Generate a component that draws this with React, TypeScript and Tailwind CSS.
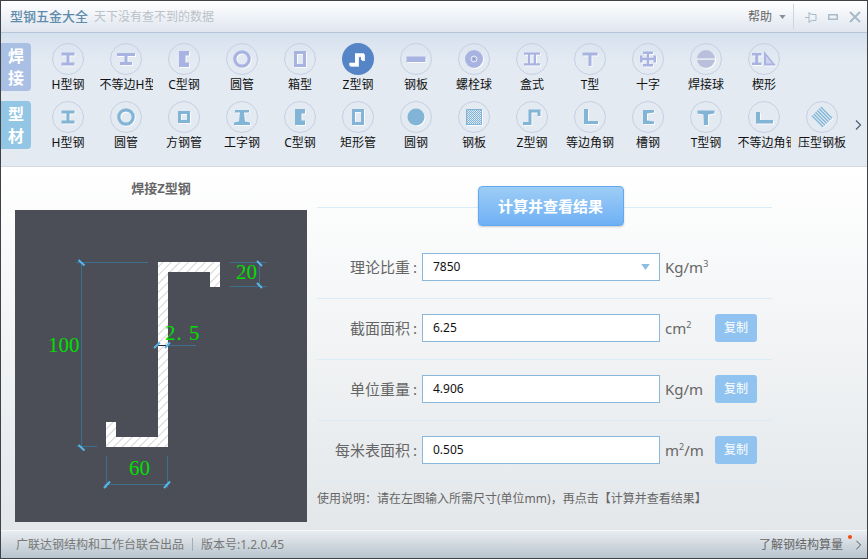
import React from "react";

const H = (
  <path d="M-6.5-6.5h13v3h-5v7h5v3h-13v-3h5v-7h-5z" fill="currentColor" />
);
const UH = (
  <path d="M-9-6h18v3h-7.5v6h4.5v3h-12v-3h4.5v-6h-7.5z" fill="currentColor" />
);
const C = (
  <path d="M-5-8H5v4.5H1.5v7H5V8H-5z" fill="currentColor" />
);
const Tube = (
  <circle r="7.2" fill="none" stroke="currentColor" strokeWidth="3.2" />
);
const BoxT = (
  <rect x="-4.5" y="-6.5" width="9" height="13" fill="none" stroke="currentColor" strokeWidth="3" />
);
const Sq = (
  <rect x="-4.5" y="-4.5" width="9" height="9" fill="none" stroke="currentColor" strokeWidth="3" />
);
const ZActive = (
  <path d="M-8.7 5.2H-1.5V-4.2H4.5V1" fill="none" stroke="#fff" strokeWidth="3" />
);
const Plate = <rect x="-9.5" y="-2.5" width="19" height="5.5" fill="currentColor" />;
const Bolt = (
  <g>
    <circle r="9" fill="currentColor" />
    <circle r="3" fill="none" stroke="#e8ecf6" strokeWidth="1" />
    <circle r="1" fill="#8f98b8" />
  </g>
);
const BoxS = (
  <g fill="currentColor">
    <rect x="-8" y="-6.5" width="16" height="2.2" />
    <rect x="-8" y="4.3" width="16" height="2.2" />
    <rect x="-4" y="-5" width="2.2" height="10" />
    <rect x="1.8" y="-5" width="2.2" height="10" />
  </g>
);
const T = <path d="M-7.5-6.5h15v3h-6V7h-3V-3.5h-6z" fill="currentColor" />;
const Cross = (
  <path d="M-5-7.5H5v2.5H1.2v3.8H5.5v-2.3H8v7H5.5v-2.3H1.2V5H5v2.5H-5V5h3.8V1.2H-5.5v2.3H-8v-7h2.5v2.3h4.3V-5H-5z" fill="currentColor" />
);
const Ball = (
  <g>
    <circle r="9" fill="#b8c0dc" />
    <rect x="-9" y="-0.6" width="18" height="1.4" fill="#eef1f7" />
  </g>
);
const Wedge = (
  <g>
    <path d="M-12-6h9.5v2.5h-3.2v7h3.2V6H-12V3.5h3.2v-7H-12z" fill="currentColor" />
    <path d="M0-8 12 6.5H0z" fill="currentColor" />
    <path d="M2-3 8 4.5H2z" fill="#cdd3ee" />
  </g>
);
const IBeam = (
  <path d="M-7-7H7v2.5H2L3 4.5l5 1V8H-8V5.5l5-1 1-9h-5z" fill="currentColor" />
);
const Round = <circle r="8.5" fill="currentColor" />;
const Dot = (
  <g>
    <rect x="-8" y="-8" width="16" height="16" fill="currentColor" />
    <rect x="-7" y="-7" width="14" height="14" fill="url(#dots)" />
  </g>
);
const ZThin = (
  <path d="M-9 6.5H-2V-6H7V-1" fill="none" stroke="currentColor" strokeWidth="3" />
);
const L1 = <path d="M-6-8h4V4H8v3H-6z" fill="currentColor" />;
const Chan = <path d="M-5-7H6v2.5L-1-3.5v7L6 4.5V7H-5z" fill="currentColor" />;
const T2 = (
  <path d="M-8.5-6.5h17v3l-6.5 1L2 8h-4l-.5-10.5-6-1z" fill="currentColor" />
);
const L2 = <path d="M-8-5h4V3H9v3.5H-8z" fill="currentColor" />;
const Press = (
  <g transform="rotate(45)" fill="currentColor">
    <rect x="-8" y="-7" width="16" height="1.4" />
    <rect x="-8" y="-4.5" width="16" height="1.4" />
    <rect x="-8" y="-2" width="16" height="1.4" />
    <rect x="-8" y="0.5" width="16" height="1.4" />
    <rect x="-8" y="3" width="16" height="1.4" />
    <rect x="-8" y="5.5" width="16" height="1.4" />
  </g>
);

type Item = { label: string; glyph: React.ReactNode; active?: boolean };

const rowA: Item[] = [
  { label: "H型钢", glyph: H },
  { label: "不等边H型", glyph: UH },
  { label: "C型钢", glyph: C },
  { label: "圆管", glyph: Tube },
  { label: "箱型", glyph: BoxT },
  { label: "Z型钢", glyph: ZActive, active: true },
  { label: "钢板", glyph: Plate },
  { label: "螺栓球", glyph: Bolt },
  { label: "盒式", glyph: BoxS },
  { label: "T型", glyph: T },
  { label: "十字", glyph: Cross },
  { label: "焊接球", glyph: Ball },
  { label: "楔形", glyph: Wedge },
];

const rowB: Item[] = [
  { label: "H型钢", glyph: H },
  { label: "圆管", glyph: Tube },
  { label: "方钢管", glyph: Sq },
  { label: "工字钢", glyph: IBeam },
  { label: "C型钢", glyph: C },
  { label: "矩形管", glyph: BoxT },
  { label: "圆钢", glyph: Round },
  { label: "钢板", glyph: Dot },
  { label: "Z型钢", glyph: ZThin },
  { label: "等边角钢", glyph: L1 },
  { label: "槽钢", glyph: Chan },
  { label: "T型钢", glyph: T2 },
  { label: "不等边角钢", glyph: L2 },
  { label: "压型钢板", glyph: Press },
];

function Tile({ item, tone }: { item: Item; tone: string }) {
  return (
    <div className="flex w-[58px] shrink-0 flex-col items-center">
      <div
        className={
          item.active
            ? "flex size-[32px] items-center justify-center rounded-full bg-[#5585c6]"
            : "flex size-[32px] items-center justify-center rounded-full border border-[#c6d0e3]"
        }
      >
        <svg
          viewBox="-16 -16 32 32"
          className={
            "size-[32px] shrink-0 overflow-visible drop-shadow-[1px_1px_0_rgba(255,255,255,0.85)] " + tone
          }
        >
          {item.glyph}
        </svg>
      </div>
      <div className="mt-[1px] h-[18px] w-[53px] overflow-hidden whitespace-nowrap text-center text-[12px] leading-[18px] text-[#111]">
        {item.label}
      </div>
    </div>
  );
}

function SideTab({ text, color }: { text: string[]; color: string }) {
  return (
    <div
      className={
        "flex h-[48px] w-[30px] shrink-0 flex-col items-center justify-center rounded-r-[4px] text-[16px] leading-[22px] font-bold text-white " +
        color
      }
    >
      {text.map((t) => (
        <span key={t}>{t}</span>
      ))}
    </div>
  );
}

function Drawing() {
  const dim = "#3e6f8f";
  const tick = "#58b6e8";
  return (
    <svg viewBox="15 210 292 312" className="h-[312px] w-[292px]">
      <defs>
        <pattern id="hatch" width="6" height="6" patternUnits="userSpaceOnUse" patternTransform="rotate(-45 0 0)">
          <rect width="6" height="6" fill="#fff" />
          <rect x="0" y="0" width="6" height="1" fill="#d4d4d4" />
        </pattern>
      </defs>
      <polygon
        points="158,262 220,262 220,287 210,287 210,272 168,272 168,447 106,447 106,422 116,422 116,437 158,437"
        fill="url(#hatch)"
      />
      <g stroke={dim} strokeWidth="1" fill="none">
        <path d="M76 262.5H148M81.5 262V447M76 446.5H97" />
        <path d="M106.5 456V488M167.5 456V488M104 484.5H168" />
        <path d="M230 262.5H267M230 286.5H267M259.5 262V287" />
        <path d="M168 345.5H196" />
      </g>
      <path d="M158 345.5H168" stroke="#1d2a33" strokeWidth="1" />
      <g stroke={tick} strokeWidth="2" fill="none">
        <path d="M78.5 260 84.5 265.5M78.5 445 84.5 450.5" />
        <path d="M104 488 110 481.5M164 488 170 481.5" />
        <path d="M257 261 262 266M257 283 262 288" />
        <path d="M154 348 160 342.5M165 348 170 342.5" />
      </g>
      <g fill="#00e000" fontFamily="'Liberation Serif', serif" fontSize="21">
        <text x="48" y="352">100</text>
        <text x="129" y="475">60</text>
        <text x="236" y="279">20</text>
        <text x="165" y="340" letterSpacing="1">2. 5</text>
      </g>
    </svg>
  );
}

function FormRow({
  label,
  value,
  unit,
  copy = true,
  select = false,
  first = false,
}: {
  label: string;
  value: string;
  unit: React.ReactNode;
  copy?: boolean;
  select?: boolean;
  first?: boolean;
}) {
  return (
    <div
      className={
        "flex items-start border-b border-[#daecf8] " +
        (first ? "h-[91px] pt-[45px]" : "h-[61px] pt-[15px]")
      }
    >
      <div className="flex w-[100px] justify-end gap-[3px] text-[15px] leading-[28px] whitespace-nowrap text-[#666]">
        <span>{label}</span>
        <span>:</span>
      </div>
      <div className="ml-[5px] flex h-[28px] w-[238px] items-center justify-between border border-[#8ab8dc] bg-white pr-[9px] pl-[10px] text-[12px] text-[#111]">
        <span>{value}</span>
        {select && (
          <svg viewBox="0 0 10 7" className="h-[6px] w-[9px]">
            <path d="M0 0h10L5 7z" fill="#8fbde0" />
          </svg>
        )}
      </div>
      <div className="ml-[5px] w-[50px] text-[15px] leading-[28px] whitespace-nowrap text-[#666]">
        {unit}
      </div>
      {copy && (
        <button className="flex h-[28px] w-[42px] items-center justify-center rounded-[3px] bg-[#90c3ef] text-[12px] text-white">
          复制
        </button>
      )}
    </div>
  );
}

const Sup = ({ children }: { children: React.ReactNode }) => (
  <sup className="top-[-6px] text-[9px]">{children}</sup>
);

export default function App() {
  return (
    <div
      className="flex h-[559px] w-[868px] flex-col overflow-hidden border border-[#3f4346] bg-white"
      style={{ fontFamily: "'Noto Sans', 'Noto Sans CJK SC', sans-serif" }}
    >
      <svg width="0" height="0" className="absolute">
        <defs>
          <pattern id="dots" width="2" height="2" patternUnits="userSpaceOnUse">
            <rect width="1" height="1" fill="#e4eef6" />
            <rect x="1" y="1" width="1" height="1" fill="#cfe0ee" />
          </pattern>
        </defs>
      </svg>

      {/* Title bar */}
      <div className="flex h-[32px] shrink-0 items-center border-b border-[#b7c5d8] bg-linear-to-b from-white to-[#dfe6ef] pl-[9px]">
        <span className="text-[13px] font-medium text-[#5f8bab]">型钢五金大全</span>
        <span className="ml-[6px] text-[12px] text-[#bac1c8]">天下没有查不到的数据</span>
        <div className="ml-auto flex items-center">
          <span className="text-[12px] text-[#666]">帮助</span>
          <svg viewBox="0 0 8 5" className="ml-[7px] h-[4px] w-[7px]">
            <path d="M0 0h8L4 5z" fill="#8a8f96" />
          </svg>
          <div className="ml-[7px] h-[25px] w-px bg-[#cfd6de]" />
          <svg viewBox="0 0 12 12" className="ml-[11px] size-[12px]" fill="none" stroke="#a8b9c9" strokeWidth="1">
            <path d="M0 6.5H4M4 1V12M4 2.5 8 3.5H11V9.5H8L4 10.5" />
          </svg>
          <svg viewBox="0 0 10 6" className="ml-[11px] h-[6px] w-[10px]" fill="none" stroke="#a8b9c9" strokeWidth="1.5">
            <rect x="0.75" y="0.75" width="8.5" height="4.5" />
          </svg>
          <svg viewBox="0 0 12 12" className="mr-[6px] ml-[11px] size-[12px]" fill="none" stroke="#a8b9c9" strokeWidth="2">
            <path d="M1 1 11 11M11 1 1 11" />
          </svg>
        </div>
      </div>

      {/* Toolbar */}
      <div className="flex h-[134px] shrink-0 flex-col border-b border-[#d6d9dd] bg-linear-to-b from-[#d6e1ef] to-[#e3eaf2] to-20% pt-[10px]">
        <div className="flex h-[58px] items-start">
          <SideTab text={["焊", "接"]} color="bg-[#a9c0e4]" />
          <div className="ml-[8px] flex">
            {rowA.map((it) => (
              <Tile key={it.label} item={it} tone={it.active ? "text-white" : "text-[#a9b3e2]"} />
            ))}
          </div>
        </div>
        <div className="flex h-[58px] items-start">
          <SideTab text={["型", "材"]} color="bg-[#92c6e4]" />
          <div className="ml-[8px] flex">
            {rowB.map((it) => (
              <Tile key={it.label} item={it} tone="text-[#82b4d6]" />
            ))}
          </div>
          <svg viewBox="0 0 7 10" className="mt-[19px] ml-[4px] h-[10px] w-[7px]" fill="none" stroke="#4d5f75" strokeWidth="1.2">
            <path d="M1 0.5 5.5 5 1 9.5" />
          </svg>
        </div>
      </div>

      {/* Main */}
      <div className="flex h-[363px] shrink-0 bg-linear-to-b from-white to-[#e3e7ea] pl-[14px]">
        <div className="flex w-[292px] shrink-0 flex-col">
          <div className="flex h-[43px] items-center justify-center text-[13px] font-bold text-[#666]">
            焊接Z型钢
          </div>
          <div className="h-[312px] bg-[#4b4e57]">
            <Drawing />
          </div>
        </div>
        <div className="ml-[10px] w-[455px]">
          <div className="flex h-[41px] items-start justify-center border-b border-[#daecf8] pt-[19px]">
            <button className="ml-[12px] flex h-[40px] w-[146px] shrink-0 items-center justify-center rounded-[4px] border border-[#62a9f1] bg-linear-to-b from-[#9dcdf5] to-[#6fb0f5] text-[15px] font-bold text-white shadow-[0_1px_2px_rgba(0,0,0,0.2)]">
              计算并查看结果
            </button>
          </div>
          <FormRow
            first
            select
            copy={false}
            label="理论比重"
            value="7850"
            unit={
              <>
                Kg/m<Sup>3</Sup>
              </>
            }
          />
          <FormRow
            label="截面面积"
            value="6.25"
            unit={
              <>
                cm<Sup>2</Sup>
              </>
            }
          />
          <FormRow label="单位重量" value="4.906" unit="Kg/m" />
          <FormRow
            label="每米表面积"
            value="0.505"
            unit={
              <>
                m<Sup>2</Sup>/m
              </>
            }
          />
          <div className="pt-[8px] text-[12px] leading-[18px] whitespace-nowrap text-[#666]">
            使用说明：请在左图输入所需尺寸(单位mm)，再点击【计算并查看结果】
          </div>
        </div>
      </div>

      {/* Footer */}
      <div className="flex h-[28px] shrink-0 items-center border-t border-[#f4f6f7] bg-linear-to-b from-[#e9edf0] to-[#b8c4ce] pl-[15px] text-[12px] text-[#777]">
        <span>广联达钢结构和工作台联合出品</span>
        <div className="mx-[8px] h-[13px] w-px bg-[#a3adb6]" />
        <span>版本号:1.2.0.45</span>
        <div className="relative ml-auto flex items-center pr-[5px] text-[#666]">
          <span>了解钢结构算量</span>
          <span className="absolute top-[-1px] right-[15px] size-[4px] rounded-full bg-[#f04a10]" />
          <svg viewBox="0 0 7 12" className="ml-[12px] h-[10px] w-[7px]" fill="none" stroke="#555" strokeWidth="1.2">
            <path d="M1 1 6 6 1 11" />
          </svg>
        </div>
      </div>
    </div>
  );
}
